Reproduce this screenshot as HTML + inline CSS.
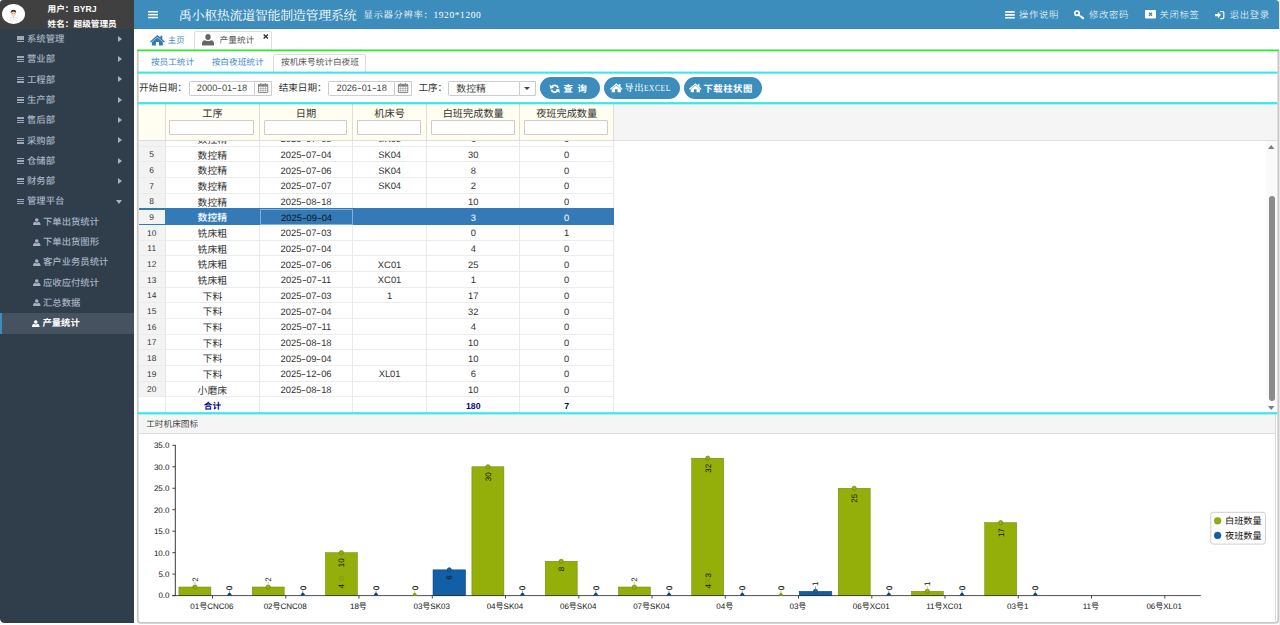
<!DOCTYPE html>
<html lang="zh-CN">
<head>
<meta charset="utf-8">
<title>禹小枢热流道智能制造管理系统</title>
<style>
*{box-sizing:border-box;margin:0;padding:0}
html,body{width:1280px;height:625px;overflow:hidden;background:#fff}
body{text-rendering:geometricPrecision;-webkit-font-smoothing:antialiased;font-family:"Liberation Sans","Noto Sans CJK SC",sans-serif;font-size:9.33px;color:#333;position:relative}
.abs{position:absolute}
svg{display:block;overflow:visible}
/* ---------- sidebar ---------- */
#side{position:absolute;left:0;top:0;width:134px;height:622.5px;background:#303e4c;border-bottom-left-radius:4.5px}
#user{position:absolute;left:0;top:0;width:134px;height:28.7px;background:#404040}
#avatar{position:absolute;left:2px;top:3.8px;width:23px;height:20.6px;border-radius:50%;background:#fff;overflow:hidden}
#user .l{position:absolute;left:47.5px;color:#fff;font-weight:700;font-size:8.67px;line-height:12px;white-space:nowrap}
.mi{position:absolute;left:0;width:134px;height:20.3px;color:#a7b1c2;font-size:9.33px;font-weight:500;line-height:20.3px;white-space:nowrap}
.mi .ic{position:absolute;left:17px;top:7.2px;width:7px;height:6px}
.mi .ic i{display:block;height:1.35px;background:#9fa9b9;margin-bottom:.95px}
.mi .tx{position:absolute;left:27px;top:0}
.mi .ar{position:absolute;left:117.5px;top:6.8px;width:0;height:0;border-left:4px solid #a7b1c2;border-top:3.3px solid transparent;border-bottom:3.3px solid transparent}
.mi .ad{position:absolute;left:116.4px;top:8.4px;width:0;height:0;border-top:4px solid #a7b1c2;border-left:3.8px solid transparent;border-right:3.8px solid transparent}
.si{position:absolute;left:0;width:134px;height:20.3px;color:#a7b1c2;font-size:9.33px;font-weight:500;line-height:20.3px;white-space:nowrap}
.si .tx{position:absolute;left:43px;top:0}
.si svg{position:absolute;left:32.5px;top:6.5px}
.si.act{background:#46525f;color:#fff;font-weight:700;border-left:2.6px solid #3c8dbc}
/* ---------- top nav ---------- */
#nav{position:absolute;left:134px;top:0;width:1145px;height:28.9px;background:#3c8dbc;color:#fff;border-bottom:1px solid #3986b6;border-top-right-radius:3.5px}
#nav .title{position:absolute;left:44.8px;top:0;line-height:31px;font-size:13px;letter-spacing:-.33px;font-family:"Liberation Serif","Noto Serif CJK SC",serif;white-space:nowrap;font-weight:400}
#nav .res{position:absolute;left:229.4px;top:0;line-height:32.8px;font-size:9.33px;letter-spacing:.67px;font-family:"Liberation Serif","Noto Serif CJK SC",serif;white-space:nowrap}
#nav .ri{position:absolute;top:0;line-height:29px;font-size:9.6px;white-space:nowrap;letter-spacing:.25px;font-family:"Liberation Sans","Noto Sans CJK SC",sans-serif}
/* ---------- tabs ---------- */
#tabbar{position:absolute;left:134px;top:28.7px;width:1146px;height:21px;background:#fff}

.nri{position:absolute;top:0;line-height:30.4px;font-weight:300;font-size:9.33px;white-space:nowrap;letter-spacing:.67px}
.lb{position:absolute;top:0;line-height:29.4px;font-size:9.6px;font-weight:400;color:#333;white-space:nowrap}
.inp{position:absolute;top:7.3px;height:15px;border:1px solid #ccc;border-radius:1.3px 0 0 1.3px;background:#fff;text-align:center;font-size:9.2px;line-height:13.6px;color:#444;white-space:nowrap;letter-spacing:0}
.cal{position:absolute;top:7.3px;width:16.8px;height:15px;border:1px solid #ccc;border-left:none;border-radius:0 1.3px 1.3px 0;background:#fff}
.cal.nocal i{position:absolute;left:4.6px;top:5.4px;width:0;height:0;border-top:3.2px solid #444;border-left:3.4px solid transparent;border-right:3.4px solid transparent}
.btn{position:absolute;top:3.5px;height:22px;border-radius:11px;background:#3c8dbc;color:#fff}
.btn span{position:absolute;top:0;line-height:24px;white-space:nowrap}

.gh{position:absolute;left:0;top:0;width:1138.3px;height:36.9px;background:#f5f5f5;border-bottom:1px solid #dedede}
.hc{position:absolute;top:0;height:36.9px;border-right:1px solid #ddd;text-align:center;font-size:10.2px;color:#333;font-weight:400}
.hc span{position:absolute;left:0;right:0;top:3.4px;line-height:14px;white-space:nowrap}
.hc i{position:absolute;left:3.5px;right:4.7px;top:16.2px;height:14.7px;border:1px solid #ccc;background:#fff;border-radius:1px}
.gb{position:absolute;left:0;width:1138.3px;overflow:hidden;background:#fff}
.gr{position:absolute;left:0;height:15.67px}
.gc{position:absolute;top:0;height:15.67px;line-height:15.9px;padding-top:.3px;overflow:hidden;border-right:1px solid #e9e9e9;border-bottom:1px solid #ececec;text-align:center;font-size:9.4px;color:#333;white-space:nowrap;letter-spacing:0}
.hy{font-weight:inherit;display:inline-block;width:4.7px;text-align:center;transform:scaleX(1.55)}
.gc.c1{font-size:9.9px;padding-top:2.0px}
.gc.rn{background:#f3f3f3;font-size:8.4px;letter-spacing:0;padding-top:.5px;border-right:1px solid #e6e6e6}
.gr.sel .gc{background:#337ab7;color:#fff;border-right-color:#337ab7;border-bottom-color:#337ab7;font-weight:500}
.gr.sel .gc.rn{background:#f3f3f3;color:#333;border-top:1px solid #337ab7;border-bottom:1px solid #337ab7;padding-top:0;font-weight:400}
.gr.sel .gc.foc{border:1px solid #7fb0dd;color:#111;padding-top:0;font-weight:400}
.gf{position:absolute;left:0;height:15.4px;background:#fff}
.gf .gc{font-size:8.67px;font-weight:700;color:#000080;border-bottom:none;line-height:16px;letter-spacing:0;padding-top:.8px}
</style>
</head>
<body>
<div class="abs" style="left:1279px;top:0;width:1px;height:625px;background:#ececec"></div>
<!-- ================= SIDEBAR ================= -->
<div id="side">
  <div id="user">
    <div id="avatar">
      <svg width="23" height="20.6" viewBox="1.4 -0.6 23 20.6">
        <path d="M9.4 13.2 Q12.8 10.6 16.2 13.2 L16.6 16.4 L9 16.4Z" fill="#f4f6f8" stroke="#d9dee3" stroke-width=".35"/>
        <path d="M12.2 11.9 L12.8 13.6 L13.4 11.9Z" fill="#8fb0cf"/>
        <ellipse cx="12.8" cy="8.9" rx="2.5" ry="2.8" fill="#f6d6bd"/>
        <path d="M10.1 8.6 Q9.9 5.2 12.9 5.2 Q15.8 5.2 15.5 8.6 Q15 6.9 12.9 7.1 Q10.9 6.8 10.1 8.6Z" fill="#4a3426"/>
        <circle cx="11.8" cy="9.1" r=".35" fill="#333"/><circle cx="13.8" cy="9.1" r=".35" fill="#333"/>
      </svg>
    </div>
    <div class="l" style="top:3px">用户：BYRJ</div>
    <div class="l" style="top:17.6px">姓名：超级管理员</div>
  </div>
  <div class="mi" style="top:29.0px"><span class="ic"><i></i><i></i><i></i></span><span class="tx">系统管理</span><span class="ar"></span></div>
  <div class="mi" style="top:49.3px"><span class="ic"><i></i><i></i><i></i></span><span class="tx">营业部</span><span class="ar"></span></div>
  <div class="mi" style="top:69.6px"><span class="ic"><i></i><i></i><i></i></span><span class="tx">工程部</span><span class="ar"></span></div>
  <div class="mi" style="top:89.9px"><span class="ic"><i></i><i></i><i></i></span><span class="tx">生产部</span><span class="ar"></span></div>
  <div class="mi" style="top:110.2px"><span class="ic"><i></i><i></i><i></i></span><span class="tx">售后部</span><span class="ar"></span></div>
  <div class="mi" style="top:130.5px"><span class="ic"><i></i><i></i><i></i></span><span class="tx">采购部</span><span class="ar"></span></div>
  <div class="mi" style="top:150.8px"><span class="ic"><i></i><i></i><i></i></span><span class="tx">仓储部</span><span class="ar"></span></div>
  <div class="mi" style="top:171.1px"><span class="ic"><i></i><i></i><i></i></span><span class="tx">财务部</span><span class="ar"></span></div>
  <div class="mi" style="top:191.4px"><span class="ic"><i></i><i></i><i></i></span><span class="tx">管理平台</span><span class="ad"></span></div>
  <div class="si" style="top:211.7px"><svg width="7.5" height="7" viewBox="0 0 15 14"><circle cx="7.5" cy="4" r="3.6" fill="#a7b1c2"/><path d="M0 14 Q0 8 4 7.5 Q7.5 10 11 7.5 Q15 8 15 14Z" fill="#a7b1c2"/></svg><span class="tx">下单出货统计</span></div>
  <div class="si" style="top:232.0px"><svg width="7.5" height="7" viewBox="0 0 15 14"><circle cx="7.5" cy="4" r="3.6" fill="#a7b1c2"/><path d="M0 14 Q0 8 4 7.5 Q7.5 10 11 7.5 Q15 8 15 14Z" fill="#a7b1c2"/></svg><span class="tx">下单出货图形</span></div>
  <div class="si" style="top:252.3px"><svg width="7.5" height="7" viewBox="0 0 15 14"><circle cx="7.5" cy="4" r="3.6" fill="#a7b1c2"/><path d="M0 14 Q0 8 4 7.5 Q7.5 10 11 7.5 Q15 8 15 14Z" fill="#a7b1c2"/></svg><span class="tx">客户业务员统计</span></div>
  <div class="si" style="top:272.6px"><svg width="7.5" height="7" viewBox="0 0 15 14"><circle cx="7.5" cy="4" r="3.6" fill="#a7b1c2"/><path d="M0 14 Q0 8 4 7.5 Q7.5 10 11 7.5 Q15 8 15 14Z" fill="#a7b1c2"/></svg><span class="tx">应收应付统计</span></div>
  <div class="si" style="top:292.9px"><svg width="7.5" height="7" viewBox="0 0 15 14"><circle cx="7.5" cy="4" r="3.6" fill="#a7b1c2"/><path d="M0 14 Q0 8 4 7.5 Q7.5 10 11 7.5 Q15 8 15 14Z" fill="#a7b1c2"/></svg><span class="tx">汇总数据</span></div>
  <div class="si act" style="top:313px;height:20.6px"><svg style="left:29.9px" width="7.5" height="7" viewBox="0 0 15 14"><circle cx="7.5" cy="4" r="3.6" fill="#fff"/><path d="M0 14 Q0 8 4 7.5 Q7.5 10 11 7.5 Q15 8 15 14Z" fill="#fff"/></svg><span class="tx" style="left:40.4px">产量统计</span></div>
</div>

<svg class="abs" style="left:0;top:0;z-index:5" width="4" height="4" viewBox="0 0 4 4"><path d="M0 0 H3.2 Q0 0 0 3.2Z" fill="#fff"/></svg>
<!-- ================= TOP NAV ================= -->
<div id="nav">
  <svg class="abs" style="left:14px;top:11px" width="10" height="7.4" viewBox="0 0 10 7.4"><rect x="0" y="0" width="10" height="1.5" fill="#fff"/><rect x="0" y="2.9" width="10" height="1.5" fill="#fff"/><rect x="0" y="5.8" width="10" height="1.5" fill="#fff"/></svg>
  <div class="title">禹小枢热流道智能制造管理系统</div>
  <div class="res">显示器分辨率：1920*1200</div>
</div>

<!-- nav right items -->
<div id="navr" style="position:absolute;left:0;top:0;width:1280px;height:28.7px;color:#fff">
  <svg class="abs" style="left:1004.7px;top:10.8px" width="9.8" height="7.6" viewBox="0 0 9.8 7.6"><rect width="9.8" height="1.7" rx=".5" fill="#fff"/><rect y="2.95" width="9.8" height="1.7" rx=".5" fill="#fff"/><rect y="5.9" width="9.8" height="1.7" rx=".5" fill="#fff"/></svg>
  <div class="nri" style="left:1019px">操作说明</div>
  <svg class="abs" style="left:1074px;top:10px" width="10.4" height="9.4" viewBox="0 0 104 94"><circle cx="30" cy="32" r="22" fill="none" stroke="#fff" stroke-width="17"/><path d="M44 46 L92 86" stroke="#fff" stroke-width="15" stroke-linecap="round"/><path d="M72 72 L84 58 M86 82 L96 70" stroke="#fff" stroke-width="11"/></svg>
  <div class="nri" style="left:1089px">修改密码</div>
  <svg class="abs" style="left:1144.5px;top:10.2px" width="11" height="8.4" viewBox="0 0 110 84"><rect width="110" height="84" rx="10" fill="#fff"/><path d="M40 27 L70 57 M70 27 L40 57" stroke="#3c8dbc" stroke-width="14"/></svg>
  <div class="nri" style="left:1159.5px">关闭标签</div>
  <svg class="abs" style="left:1215.3px;top:10.6px" width="9.4" height="8.2" viewBox="0 0 94 82"><path d="M52 6 H78 Q88 6 88 16 V66 Q88 76 78 76 H52" fill="none" stroke="#fff" stroke-width="12"/><path d="M0 30 H28 V10 L60 41 L28 72 V52 H0Z" fill="#fff"/></svg>
  <div class="nri" style="left:1229.7px">退出登录</div>
  
</div>


<!-- ================= TAB BAR ================= -->
<div id="tabbar">
  <svg class="abs" style="left:16px;top:6.2px" width="14.8" height="10.4" viewBox="0 0 148 104"><path d="M74 0 L104 26 V8 H123 V42 L148 64 L139 74 L74 19 L9 74 L0 64Z" fill="#337ab7"/><path d="M74 25 L128 70 V104 H89 V70 H59 V104 H20 V70Z" fill="#337ab7"/></svg>
  <div class="abs" style="left:33.8px;top:0;line-height:23.4px;font-size:8.4px;color:#4a86bd;white-space:nowrap">主页</div>
  <div class="abs" style="left:60px;top:2.5px;width:78px;height:19px;border:1px solid #ddd;border-bottom:none;border-radius:2.6px 2.6px 0 0;background:#fff"></div>
  <svg class="abs" style="left:68.4px;top:5.5px" width="12" height="11.4" viewBox="0 0 120 114"><ellipse cx="60" cy="30" rx="27" ry="30" fill="#666"/><path d="M0 114 V96 Q0 66 32 62 Q60 80 88 62 Q120 66 120 96 V114Z" fill="#666"/></svg>
  <div class="abs" style="left:85.6px;top:0;line-height:23.2px;font-size:8.67px;color:#555;white-space:nowrap">产量统计</div>
  <svg class="abs" style="left:129.3px;top:5.4px" width="5.6" height="4.9" viewBox="0 0 52 46"><path d="M6 4 L46 42 M46 4 L6 42" stroke="#333" stroke-width="13"/></svg>
</div>
<svg class="abs" style="left:0;top:0;z-index:3" width="1280" height="625" viewBox="0 0 1280 625"><rect x="137.2" y="49.5" width="1141.4" height="1.75" fill="#2ee82e"/><rect x="137.6" y="71.6" width="1139.8" height="2.05" fill="#36e8e8"/><rect x="137.6" y="102.1" width="1139.8" height="2.2" fill="#36e8e8"/><rect x="137.6" y="412.2" width="1139.8" height="2.15" fill="#36e8e8"/></svg>
<svg class="abs" style="left:0;top:0" width="1280" height="625" viewBox="0 0 1280 625"><path d="M137.75 49.4 V620 Q137.75 622.85 140.6 622.85 H1275.4 Q1278.3 622.85 1278.3 620 V49.4" fill="none" stroke="#c9c9c9" stroke-width="1.75"/></svg>


<!-- ================= SUB TABS ================= -->
<div id="subtabs" style="position:absolute;left:138.5px;top:51.1px;width:1138.3px;height:20.5px;background:#fff">
  <div class="abs" style="left:12.4px;top:0;line-height:22.8px;font-size:8.67px;color:#428bca;white-space:nowrap">按员工统计</div>
  <div class="abs" style="left:73.2px;top:0;line-height:22.8px;font-size:8.67px;color:#428bca;white-space:nowrap">按白夜班统计</div>
  <div class="abs" style="left:134.4px;top:3px;width:93.6px;height:17.5px;border:1px solid #ddd;border-bottom:none;border-radius:2.6px 2.6px 0 0;background:#fff"></div>
  <div class="abs" style="left:142.5px;top:0;line-height:22.8px;font-size:8.67px;color:#555;white-space:nowrap">按机床号统计白夜班</div>
</div>


<!-- ================= TOOLBAR ================= -->
<div id="toolbar" style="position:absolute;left:138.5px;top:73.6px;width:1138.3px;height:28.5px;background:#fff">
  <div class="lb" style="left:.5px">开始日期：</div>
  <div class="inp" style="left:50.2px;width:66.6px"><span>2000<b class="hy">-</b>01<b class="hy">-</b>18</span></div>
  <div class="cal" style="left:116.8px"><svg class="abs" style="left:3.2px;top:1.2px" width="10.2" height="10" viewBox="0 0 102 100"><rect x="4" y="14" width="94" height="82" rx="6" fill="#fff" stroke="#666" stroke-width="8"/><rect x="4" y="14" width="94" height="22" fill="#777"/><path d="M4 56 H98 M4 76 H98 M28 36 V96 M51 36 V96 M74 36 V96" stroke="#888" stroke-width="5"/><rect x="22" y="0" width="12" height="28" rx="5" fill="#666" stroke="#fff" stroke-width="3"/><rect x="68" y="0" width="12" height="28" rx="5" fill="#666" stroke="#fff" stroke-width="3"/></svg></div>
  <div class="lb" style="left:140.2px">结束日期：</div>
  <div class="inp" style="left:189.9px;width:66.6px"><span>2026<b class="hy">-</b>01<b class="hy">-</b>18</span></div>
  <div class="cal" style="left:256.5px"><svg class="abs" style="left:3.2px;top:1.2px" width="10.2" height="10" viewBox="0 0 102 100"><rect x="4" y="14" width="94" height="82" rx="6" fill="#fff" stroke="#666" stroke-width="8"/><rect x="4" y="14" width="94" height="22" fill="#777"/><path d="M4 56 H98 M4 76 H98 M28 36 V96 M51 36 V96 M74 36 V96" stroke="#888" stroke-width="5"/><rect x="22" y="0" width="12" height="28" rx="5" fill="#666" stroke="#fff" stroke-width="3"/><rect x="68" y="0" width="12" height="28" rx="5" fill="#666" stroke="#fff" stroke-width="3"/></svg></div>
  <div class="lb" style="left:279.9px">工序：</div>
  <div class="inp" style="left:309.5px;width:71.5px;text-align:left;padding-left:7.3px;font-size:9.9px;line-height:15.2px"><span>数控精</span></div>
  <div class="cal nocal" style="left:381px"><i></i></div>
  <div class="btn" style="left:401.2px;width:60.6px"><svg class="abs" style="left:10px;top:6.9px" width="9.4" height="9.6" viewBox="0 0 94 96"><path d="M80 40 A34 34 0 0 0 18 30" fill="none" stroke="#fff" stroke-width="19"/><path d="M-4 6 L2 48 L40 38Z" fill="#fff"/><path d="M14 56 A34 34 0 0 0 76 66" fill="none" stroke="#fff" stroke-width="19"/><path d="M98 90 L92 48 L54 58Z" fill="#fff"/></svg><span style="left:23.8px;font-weight:700;font-size:9.33px;letter-spacing:1.1px">查 询</span></div>
  <div class="btn" style="left:465.5px;width:76px"><svg class="abs" style="left:5.9px;top:6.3px" width="12.6" height="9.6" viewBox="0 0 148 104"><path d="M74 0 L104 26 V8 H123 V42 L148 64 L139 74 L74 19 L9 74 L0 64Z" fill="#fff"/><path d="M74 25 L128 70 V104 H89 V70 H59 V104 H20 V70Z" fill="#fff"/></svg><span style="left:20.3px;font-family:'Liberation Serif','Noto Serif CJK SC',serif;font-size:9.33px;letter-spacing:.67px;font-weight:500;line-height:24.4px">导出<b style="font-weight:500;display:inline-block;transform:scaleX(.8);transform-origin:0 50%">EXCEL</b></span></div>
  <div class="btn" style="left:545.2px;width:78.3px"><svg class="abs" style="left:5.3px;top:6.3px" width="12.6" height="9.6" viewBox="0 0 148 104"><path d="M74 0 L104 26 V8 H123 V42 L148 64 L139 74 L74 19 L9 74 L0 64Z" fill="#fff"/><path d="M74 25 L128 70 V104 H89 V70 H59 V104 H20 V70Z" fill="#fff"/></svg><span style="left:19.7px;font-weight:700;font-size:9.33px;letter-spacing:.55px">下载柱状图</span></div>
</div>

<!-- ================= GRID ================= -->
<div id="grid" style="position:absolute;left:138.5px;top:104.3px;width:1138.3px;height:307.9px;background:#fff;overflow:hidden">
<div class="gh">
<div class="abs" style="left:0;top:0;width:475.5px;height:35.9px;background:#fffef0"></div>
<div class="hc" style="left:0;width:27.4px"></div>
<div class="hc" style="left:27.4px;width:94.1px"><span>工序</span><i></i></div>
<div class="hc" style="left:121.5px;width:93.1px"><span>日期</span><i></i></div>
<div class="hc" style="left:214.6px;width:74.0px"><span>机床号</span><i></i></div>
<div class="hc" style="left:288.6px;width:93.3px"><span>白班完成数量</span><i></i></div>
<div class="hc" style="left:381.9px;width:93.6px"><span>夜班完成数量</span><i></i></div>
</div>
<div class="gb" style="top:36.9px;height:256.22px">
<div class="gr" style="top:-10.17px;width:475.5px">
<div class="gc rn" style="left:0.0px;width:27.4px"></div>
<div class="gc c1" style="left:27.4px;width:94.1px">数控精</div>
<div class="gc" style="left:121.5px;width:93.1px">2025<span class="hy">-</span>07<span class="hy">-</span>03</div>
<div class="gc" style="left:214.6px;width:74.0px">SK03</div>
<div class="gc" style="left:288.6px;width:93.3px">6</div>
<div class="gc" style="left:381.9px;width:93.6px">0</div>
</div>
<div class="gr" style="top:5.50px;width:475.5px">
<div class="gc rn" style="left:0.0px;width:27.4px">5</div>
<div class="gc c1" style="left:27.4px;width:94.1px">数控精</div>
<div class="gc" style="left:121.5px;width:93.1px">2025<span class="hy">-</span>07<span class="hy">-</span>04</div>
<div class="gc" style="left:214.6px;width:74.0px">SK04</div>
<div class="gc" style="left:288.6px;width:93.3px">30</div>
<div class="gc" style="left:381.9px;width:93.6px">0</div>
</div>
<div class="gr" style="top:21.17px;width:475.5px">
<div class="gc rn" style="left:0.0px;width:27.4px">6</div>
<div class="gc c1" style="left:27.4px;width:94.1px">数控精</div>
<div class="gc" style="left:121.5px;width:93.1px">2025<span class="hy">-</span>07<span class="hy">-</span>06</div>
<div class="gc" style="left:214.6px;width:74.0px">SK04</div>
<div class="gc" style="left:288.6px;width:93.3px">8</div>
<div class="gc" style="left:381.9px;width:93.6px">0</div>
</div>
<div class="gr" style="top:36.84px;width:475.5px">
<div class="gc rn" style="left:0.0px;width:27.4px">7</div>
<div class="gc c1" style="left:27.4px;width:94.1px">数控精</div>
<div class="gc" style="left:121.5px;width:93.1px">2025<span class="hy">-</span>07<span class="hy">-</span>07</div>
<div class="gc" style="left:214.6px;width:74.0px">SK04</div>
<div class="gc" style="left:288.6px;width:93.3px">2</div>
<div class="gc" style="left:381.9px;width:93.6px">0</div>
</div>
<div class="gr" style="top:52.51px;width:475.5px">
<div class="gc rn" style="left:0.0px;width:27.4px">8</div>
<div class="gc c1" style="left:27.4px;width:94.1px">数控精</div>
<div class="gc" style="left:121.5px;width:93.1px">2025<span class="hy">-</span>08<span class="hy">-</span>18</div>
<div class="gc" style="left:214.6px;width:74.0px"></div>
<div class="gc" style="left:288.6px;width:93.3px">10</div>
<div class="gc" style="left:381.9px;width:93.6px">0</div>
</div>
<div class="abs" style="left:0;top:67.28px;width:475.5px;height:2px;background:#337ab7"></div>
<div class="gr sel" style="top:68.18px;width:475.5px">
<div class="gc rn" style="left:0.0px;width:27.4px">9</div>
<div class="gc c1" style="left:27.4px;width:94.1px">数控精</div>
<div class="gc foc" style="left:121.5px;width:93.1px">2025<span class="hy">-</span>09<span class="hy">-</span>04</div>
<div class="gc" style="left:214.6px;width:74.0px"></div>
<div class="gc" style="left:288.6px;width:93.3px">3</div>
<div class="gc" style="left:381.9px;width:93.6px">0</div>
</div>
<div class="gr" style="top:83.85px;width:475.5px">
<div class="gc rn" style="left:0.0px;width:27.4px">10</div>
<div class="gc c1" style="left:27.4px;width:94.1px">铣床粗</div>
<div class="gc" style="left:121.5px;width:93.1px">2025<span class="hy">-</span>07<span class="hy">-</span>03</div>
<div class="gc" style="left:214.6px;width:74.0px"></div>
<div class="gc" style="left:288.6px;width:93.3px">0</div>
<div class="gc" style="left:381.9px;width:93.6px">1</div>
</div>
<div class="gr" style="top:99.52px;width:475.5px">
<div class="gc rn" style="left:0.0px;width:27.4px">11</div>
<div class="gc c1" style="left:27.4px;width:94.1px">铣床粗</div>
<div class="gc" style="left:121.5px;width:93.1px">2025<span class="hy">-</span>07<span class="hy">-</span>04</div>
<div class="gc" style="left:214.6px;width:74.0px"></div>
<div class="gc" style="left:288.6px;width:93.3px">4</div>
<div class="gc" style="left:381.9px;width:93.6px">0</div>
</div>
<div class="gr" style="top:115.19px;width:475.5px">
<div class="gc rn" style="left:0.0px;width:27.4px">12</div>
<div class="gc c1" style="left:27.4px;width:94.1px">铣床粗</div>
<div class="gc" style="left:121.5px;width:93.1px">2025<span class="hy">-</span>07<span class="hy">-</span>06</div>
<div class="gc" style="left:214.6px;width:74.0px">XC01</div>
<div class="gc" style="left:288.6px;width:93.3px">25</div>
<div class="gc" style="left:381.9px;width:93.6px">0</div>
</div>
<div class="gr" style="top:130.86px;width:475.5px">
<div class="gc rn" style="left:0.0px;width:27.4px">13</div>
<div class="gc c1" style="left:27.4px;width:94.1px">铣床粗</div>
<div class="gc" style="left:121.5px;width:93.1px">2025<span class="hy">-</span>07<span class="hy">-</span>11</div>
<div class="gc" style="left:214.6px;width:74.0px">XC01</div>
<div class="gc" style="left:288.6px;width:93.3px">1</div>
<div class="gc" style="left:381.9px;width:93.6px">0</div>
</div>
<div class="gr" style="top:146.53px;width:475.5px">
<div class="gc rn" style="left:0.0px;width:27.4px">14</div>
<div class="gc c1" style="left:27.4px;width:94.1px">下料</div>
<div class="gc" style="left:121.5px;width:93.1px">2025<span class="hy">-</span>07<span class="hy">-</span>03</div>
<div class="gc" style="left:214.6px;width:74.0px">1</div>
<div class="gc" style="left:288.6px;width:93.3px">17</div>
<div class="gc" style="left:381.9px;width:93.6px">0</div>
</div>
<div class="gr" style="top:162.20px;width:475.5px">
<div class="gc rn" style="left:0.0px;width:27.4px">15</div>
<div class="gc c1" style="left:27.4px;width:94.1px">下料</div>
<div class="gc" style="left:121.5px;width:93.1px">2025<span class="hy">-</span>07<span class="hy">-</span>04</div>
<div class="gc" style="left:214.6px;width:74.0px"></div>
<div class="gc" style="left:288.6px;width:93.3px">32</div>
<div class="gc" style="left:381.9px;width:93.6px">0</div>
</div>
<div class="gr" style="top:177.87px;width:475.5px">
<div class="gc rn" style="left:0.0px;width:27.4px">16</div>
<div class="gc c1" style="left:27.4px;width:94.1px">下料</div>
<div class="gc" style="left:121.5px;width:93.1px">2025<span class="hy">-</span>07<span class="hy">-</span>11</div>
<div class="gc" style="left:214.6px;width:74.0px"></div>
<div class="gc" style="left:288.6px;width:93.3px">4</div>
<div class="gc" style="left:381.9px;width:93.6px">0</div>
</div>
<div class="gr" style="top:193.54px;width:475.5px">
<div class="gc rn" style="left:0.0px;width:27.4px">17</div>
<div class="gc c1" style="left:27.4px;width:94.1px">下料</div>
<div class="gc" style="left:121.5px;width:93.1px">2025<span class="hy">-</span>08<span class="hy">-</span>18</div>
<div class="gc" style="left:214.6px;width:74.0px"></div>
<div class="gc" style="left:288.6px;width:93.3px">10</div>
<div class="gc" style="left:381.9px;width:93.6px">0</div>
</div>
<div class="gr" style="top:209.21px;width:475.5px">
<div class="gc rn" style="left:0.0px;width:27.4px">18</div>
<div class="gc c1" style="left:27.4px;width:94.1px">下料</div>
<div class="gc" style="left:121.5px;width:93.1px">2025<span class="hy">-</span>09<span class="hy">-</span>04</div>
<div class="gc" style="left:214.6px;width:74.0px"></div>
<div class="gc" style="left:288.6px;width:93.3px">10</div>
<div class="gc" style="left:381.9px;width:93.6px">0</div>
</div>
<div class="gr" style="top:224.88px;width:475.5px">
<div class="gc rn" style="left:0.0px;width:27.4px">19</div>
<div class="gc c1" style="left:27.4px;width:94.1px">下料</div>
<div class="gc" style="left:121.5px;width:93.1px">2025<span class="hy">-</span>12<span class="hy">-</span>06</div>
<div class="gc" style="left:214.6px;width:74.0px">XL01</div>
<div class="gc" style="left:288.6px;width:93.3px">6</div>
<div class="gc" style="left:381.9px;width:93.6px">0</div>
</div>
<div class="gr" style="top:240.55px;width:475.5px">
<div class="gc rn" style="left:0.0px;width:27.4px">20</div>
<div class="gc c1" style="left:27.4px;width:94.1px">小磨床</div>
<div class="gc" style="left:121.5px;width:93.1px">2025<span class="hy">-</span>08<span class="hy">-</span>18</div>
<div class="gc" style="left:214.6px;width:74.0px"></div>
<div class="gc" style="left:288.6px;width:93.3px">10</div>
<div class="gc" style="left:381.9px;width:93.6px">0</div>
</div>
</div>
<div class="gf" style="top:293.12px;width:475.5px">
<div class="gc" style="left:0.0px;width:27.4px"></div>
<div class="gc" style="left:27.4px;width:94.1px">合计</div>
<div class="gc" style="left:121.5px;width:93.1px"></div>
<div class="gc" style="left:214.6px;width:74.0px"></div>
<div class="gc" style="left:288.6px;width:93.3px">180</div>
<div class="gc" style="left:381.9px;width:93.6px">7</div>
</div>
<div class="abs" style="left:1127.8px;top:36.9px;width:10.5px;height:271.1px;background:#fafafa"></div>
<svg class="abs" style="left:1129.9px;top:40.3px" width="6.4" height="4" viewBox="0 0 56 34"><path d="M28 0 L56 34 H0Z" fill="#7d7d7d"/></svg>
<div class="abs" style="left:1130.1px;top:91.7px;width:6.2px;height:205px;border-radius:3.1px;background:#8b8b8b"></div>
<svg class="abs" style="left:1129.9px;top:301.8px" width="6.4" height="4" viewBox="0 0 56 34"><path d="M28 34 L56 0 H0Z" fill="#7d7d7d"/></svg>
</div>

<!-- ================= CHART ================= -->
<div class="abs" style="left:138.5px;top:414.4px;width:1137.4px;height:19.4px;background:#f5f5f5;border-bottom:1px solid #ddd;border-right:1px solid #ddd"><div class="abs" style="left:7.7px;top:0;line-height:20.6px;font-size:8.67px;color:#444;white-space:nowrap">工时机床图标</div></div>
<div class="abs" style="left:1274.9px;top:433px;width:1px;height:189px;background:#ddd"></div>
<svg class="abs" style="left:0;top:0" width="1280" height="625" viewBox="0 0 1280 625" font-family="'Liberation Sans','Noto Sans CJK SC',sans-serif" font-size="8" fill="#111">
<text x="169.5" y="598.4" text-anchor="end">0.0</text>
<path d="M172.3 595.60 H175.3" stroke="#222" stroke-width=".8"/>
<text x="169.5" y="576.9" text-anchor="end">5.0</text>
<path d="M172.3 574.13 H175.3" stroke="#222" stroke-width=".8"/>
<text x="169.5" y="555.5" text-anchor="end">10.0</text>
<path d="M172.3 552.66 H175.3" stroke="#222" stroke-width=".8"/>
<text x="169.5" y="534.0" text-anchor="end">15.0</text>
<path d="M172.3 531.19 H175.3" stroke="#222" stroke-width=".8"/>
<text x="169.5" y="512.5" text-anchor="end">20.0</text>
<path d="M172.3 509.71 H175.3" stroke="#222" stroke-width=".8"/>
<text x="169.5" y="491.0" text-anchor="end">25.0</text>
<path d="M172.3 488.24 H175.3" stroke="#222" stroke-width=".8"/>
<text x="169.5" y="469.6" text-anchor="end">30.0</text>
<path d="M172.3 466.77 H175.3" stroke="#222" stroke-width=".8"/>
<text x="169.5" y="448.1" text-anchor="end">35.0</text>
<path d="M172.3 445.30 H175.3" stroke="#222" stroke-width=".8"/>
<path d="M175.3 444.90 V596.00" stroke="#222" stroke-width=".9"/>
<path d="M212.5 595.6 V598.6" stroke="#222" stroke-width=".8"/>
<text x="211.9" y="608.9" text-anchor="middle">01号CNC06</text>
<path d="M285.8 595.6 V598.6" stroke="#222" stroke-width=".8"/>
<text x="285.2" y="608.9" text-anchor="middle">02号CNC08</text>
<path d="M359.0 595.6 V598.6" stroke="#222" stroke-width=".8"/>
<text x="358.4" y="608.9" text-anchor="middle">18号</text>
<path d="M432.3 595.6 V598.6" stroke="#222" stroke-width=".8"/>
<text x="431.7" y="608.9" text-anchor="middle">03号SK03</text>
<path d="M505.5 595.6 V598.6" stroke="#222" stroke-width=".8"/>
<text x="504.9" y="608.9" text-anchor="middle">04号SK04</text>
<path d="M578.8 595.6 V598.6" stroke="#222" stroke-width=".8"/>
<text x="578.2" y="608.9" text-anchor="middle">06号SK04</text>
<path d="M652.0 595.6 V598.6" stroke="#222" stroke-width=".8"/>
<text x="651.4" y="608.9" text-anchor="middle">07号SK04</text>
<path d="M725.3 595.6 V598.6" stroke="#222" stroke-width=".8"/>
<text x="724.7" y="608.9" text-anchor="middle">04号</text>
<path d="M798.5 595.6 V598.6" stroke="#222" stroke-width=".8"/>
<text x="797.9" y="608.9" text-anchor="middle">03号</text>
<path d="M871.8 595.6 V598.6" stroke="#222" stroke-width=".8"/>
<text x="871.2" y="608.9" text-anchor="middle">06号XC01</text>
<path d="M945.0 595.6 V598.6" stroke="#222" stroke-width=".8"/>
<text x="944.4" y="608.9" text-anchor="middle">11号XC01</text>
<path d="M1018.3 595.6 V598.6" stroke="#222" stroke-width=".8"/>
<text x="1017.7" y="608.9" text-anchor="middle">03号1</text>
<path d="M1091.5 595.6 V598.6" stroke="#222" stroke-width=".8"/>
<text x="1090.9" y="608.9" text-anchor="middle">11号</text>
<path d="M1164.8 595.6 V598.6" stroke="#222" stroke-width=".8"/>
<text x="1164.2" y="608.9" text-anchor="middle">06号XL01</text>
<rect x="178.9" y="587.01" width="32.0" height="8.59" fill="#94ae0a" stroke="#6f8408" stroke-width=".5"/>
<rect x="252.2" y="587.01" width="32.0" height="8.59" fill="#94ae0a" stroke="#6f8408" stroke-width=".5"/>
<rect x="325.4" y="552.66" width="32.0" height="42.94" fill="#94ae0a" stroke="#6f8408" stroke-width=".5"/>
<rect x="433.0" y="569.83" width="32.6" height="25.77" fill="#115fa6" stroke="#0b4275" stroke-width=".5"/>
<rect x="471.9" y="466.77" width="32.0" height="128.83" fill="#94ae0a" stroke="#6f8408" stroke-width=".5"/>
<rect x="545.2" y="561.25" width="32.0" height="34.35" fill="#94ae0a" stroke="#6f8408" stroke-width=".5"/>
<rect x="618.4" y="587.01" width="32.0" height="8.59" fill="#94ae0a" stroke="#6f8408" stroke-width=".5"/>
<rect x="691.7" y="458.18" width="32.0" height="137.42" fill="#94ae0a" stroke="#6f8408" stroke-width=".5"/>
<rect x="799.2" y="591.31" width="32.6" height="4.29" fill="#115fa6" stroke="#0b4275" stroke-width=".5"/>
<rect x="838.2" y="488.24" width="32.0" height="107.36" fill="#94ae0a" stroke="#6f8408" stroke-width=".5"/>
<rect x="911.4" y="591.31" width="32.0" height="4.29" fill="#94ae0a" stroke="#6f8408" stroke-width=".5"/>
<rect x="984.7" y="522.60" width="32.0" height="73.00" fill="#94ae0a" stroke="#6f8408" stroke-width=".5"/>
<path d="M172.3 595.60 H1200.8" stroke="#222" stroke-width=".8"/>
<circle cx="194.9" cy="587.01" r="2.1" fill="#94ae0a" stroke="#6f8408" stroke-width=".7"/>
<path d="M194.9 582.0 V584.6" stroke="#c3d64a" stroke-width=".9"/>
<path d="M226.9 595.6 Q227.9 593.4 229.5 592.3 Q231.1 593.4 232.1 595.6Z" fill="#0b4275"/>
<path d="M229.5 590.6 V593.0" stroke="#5aa0e0" stroke-width=".9"/>
<circle cx="268.2" cy="587.01" r="2.1" fill="#94ae0a" stroke="#6f8408" stroke-width=".7"/>
<path d="M268.2 582.0 V584.6" stroke="#c3d64a" stroke-width=".9"/>
<path d="M300.2 595.6 Q301.2 593.4 302.8 592.3 Q304.4 593.4 305.4 595.6Z" fill="#0b4275"/>
<path d="M302.8 590.6 V593.0" stroke="#5aa0e0" stroke-width=".9"/>
<circle cx="341.4" cy="552.66" r="2.1" fill="#94ae0a" stroke="#6f8408" stroke-width=".7"/>
<circle cx="341.4" cy="578.42" r="2.1" fill="#94ae0a" stroke="#6f8408" stroke-width=".7" opacity=".55"/>
<path d="M373.4 595.6 Q374.4 593.4 376.0 592.3 Q377.6 593.4 378.6 595.6Z" fill="#0b4275"/>
<path d="M376.0 590.6 V593.0" stroke="#5aa0e0" stroke-width=".9"/>
<path d="M412.1 595.6 Q413.1 593.4 414.7 592.3 Q416.3 593.4 417.3 595.6Z" fill="#8ba30a"/>
<path d="M414.7 590.6 V593.0" stroke="#c3d64a" stroke-width=".9"/>
<circle cx="449.3" cy="569.83" r="2.1" fill="#1a62a8" stroke="#0b4275" stroke-width=".7"/>
<circle cx="487.9" cy="466.77" r="2.1" fill="#94ae0a" stroke="#6f8408" stroke-width=".7"/>
<path d="M519.9 595.6 Q520.9 593.4 522.5 592.3 Q524.1 593.4 525.1 595.6Z" fill="#0b4275"/>
<path d="M522.5 590.6 V593.0" stroke="#5aa0e0" stroke-width=".9"/>
<circle cx="561.2" cy="561.25" r="2.1" fill="#94ae0a" stroke="#6f8408" stroke-width=".7"/>
<path d="M593.2 595.6 Q594.2 593.4 595.8 592.3 Q597.4 593.4 598.4 595.6Z" fill="#0b4275"/>
<path d="M595.8 590.6 V593.0" stroke="#5aa0e0" stroke-width=".9"/>
<circle cx="634.4" cy="587.01" r="2.1" fill="#94ae0a" stroke="#6f8408" stroke-width=".7"/>
<path d="M634.4 582.0 V584.6" stroke="#c3d64a" stroke-width=".9"/>
<path d="M666.4 595.6 Q667.4 593.4 669.0 592.3 Q670.6 593.4 671.6 595.6Z" fill="#0b4275"/>
<path d="M669.0 590.6 V593.0" stroke="#5aa0e0" stroke-width=".9"/>
<circle cx="707.7" cy="458.18" r="2.1" fill="#94ae0a" stroke="#6f8408" stroke-width=".7"/>
<circle cx="707.7" cy="578.42" r="2.1" fill="#94ae0a" stroke="#6f8408" stroke-width=".7" opacity=".55"/>
<circle cx="707.7" cy="582.72" r="2.1" fill="#94ae0a" stroke="#6f8408" stroke-width=".7" opacity=".55"/>
<path d="M739.7 595.6 Q740.7 593.4 742.3 592.3 Q743.9 593.4 744.9 595.6Z" fill="#0b4275"/>
<path d="M742.3 590.6 V593.0" stroke="#5aa0e0" stroke-width=".9"/>
<path d="M778.3 595.6 Q779.3 593.4 780.9 592.3 Q782.5 593.4 783.5 595.6Z" fill="#8ba30a"/>
<path d="M780.9 590.6 V593.0" stroke="#c3d64a" stroke-width=".9"/>
<circle cx="815.5" cy="591.31" r="2.1" fill="#1a62a8" stroke="#0b4275" stroke-width=".7"/>
<path d="M815.5 586.3 V588.9" stroke="#5aa0e0" stroke-width=".9"/>
<circle cx="854.2" cy="488.24" r="2.1" fill="#94ae0a" stroke="#6f8408" stroke-width=".7"/>
<path d="M886.2 595.6 Q887.2 593.4 888.8 592.3 Q890.4 593.4 891.4 595.6Z" fill="#0b4275"/>
<path d="M888.8 590.6 V593.0" stroke="#5aa0e0" stroke-width=".9"/>
<circle cx="927.4" cy="591.31" r="2.1" fill="#94ae0a" stroke="#6f8408" stroke-width=".7"/>
<path d="M927.4 586.3 V588.9" stroke="#c3d64a" stroke-width=".9"/>
<path d="M959.4 595.6 Q960.4 593.4 962.0 592.3 Q963.6 593.4 964.6 595.6Z" fill="#0b4275"/>
<path d="M962.0 590.6 V593.0" stroke="#5aa0e0" stroke-width=".9"/>
<circle cx="1000.7" cy="522.60" r="2.1" fill="#94ae0a" stroke="#6f8408" stroke-width=".7"/>
<path d="M1032.7 595.6 Q1033.7 593.4 1035.3 592.3 Q1036.9 593.4 1037.9 595.6Z" fill="#0b4275"/>
<path d="M1035.3 590.6 V593.0" stroke="#5aa0e0" stroke-width=".9"/>
<text transform="translate(197.8 581.7) rotate(-90)" text-anchor="start">2</text>
<text transform="translate(232.4 590.3) rotate(-90)" text-anchor="start" stroke="#111" stroke-width=".25">0</text>
<text transform="translate(271.1 581.7) rotate(-90)" text-anchor="start">2</text>
<text transform="translate(305.7 590.3) rotate(-90)" text-anchor="start" stroke="#111" stroke-width=".25">0</text>
<text transform="translate(344.3 558.3) rotate(-90)" text-anchor="end">10</text>
<text transform="translate(344.3 584.0) rotate(-90)" text-anchor="end">4</text>
<text transform="translate(378.9 590.3) rotate(-90)" text-anchor="start" stroke="#111" stroke-width=".25">0</text>
<text transform="translate(417.6 590.3) rotate(-90)" text-anchor="start" stroke="#111" stroke-width=".25">0</text>
<text transform="translate(452.2 575.4) rotate(-90)" text-anchor="end">6</text>
<text transform="translate(490.8 472.4) rotate(-90)" text-anchor="end">30</text>
<text transform="translate(525.4 590.3) rotate(-90)" text-anchor="start" stroke="#111" stroke-width=".25">0</text>
<text transform="translate(564.1 566.8) rotate(-90)" text-anchor="end">8</text>
<text transform="translate(598.7 590.3) rotate(-90)" text-anchor="start" stroke="#111" stroke-width=".25">0</text>
<text transform="translate(637.3 581.7) rotate(-90)" text-anchor="start">2</text>
<text transform="translate(671.9 590.3) rotate(-90)" text-anchor="start" stroke="#111" stroke-width=".25">0</text>
<text transform="translate(710.6 463.8) rotate(-90)" text-anchor="end">32</text>
<text transform="translate(710.6 584.0) rotate(-90)" text-anchor="end">4</text>
<text transform="translate(710.6 577.4) rotate(-90)" text-anchor="start">3</text>
<text transform="translate(745.2 590.3) rotate(-90)" text-anchor="start" stroke="#111" stroke-width=".25">0</text>
<text transform="translate(783.8 590.3) rotate(-90)" text-anchor="start" stroke="#111" stroke-width=".25">0</text>
<text transform="translate(818.4 586.0) rotate(-90)" text-anchor="start">1</text>
<text transform="translate(857.1 493.8) rotate(-90)" text-anchor="end">25</text>
<text transform="translate(891.7 590.3) rotate(-90)" text-anchor="start" stroke="#111" stroke-width=".25">0</text>
<text transform="translate(930.3 586.0) rotate(-90)" text-anchor="start">1</text>
<text transform="translate(964.9 590.3) rotate(-90)" text-anchor="start" stroke="#111" stroke-width=".25">0</text>
<text transform="translate(1003.6 528.2) rotate(-90)" text-anchor="end">17</text>
<text transform="translate(1038.2 590.3) rotate(-90)" text-anchor="start" stroke="#111" stroke-width=".25">0</text>
<rect x="1210.8" y="512.3" width="54.6" height="31.8" rx="2.5" fill="#fff" stroke="#c8c8c8" stroke-width=".9"/>
<circle cx="1217.6" cy="520.8" r="3.4" fill="#94ae0a" stroke="#6f8408" stroke-width=".4"/>
<circle cx="1217.6" cy="535.4" r="3.4" fill="#115fa6" stroke="#0b4275" stroke-width=".4"/>
<text x="1225" y="524.2" font-size="9.2">白班数量</text>
<text x="1225" y="538.8" font-size="9.2">夜班数量</text>
</svg>

</body>
</html>
